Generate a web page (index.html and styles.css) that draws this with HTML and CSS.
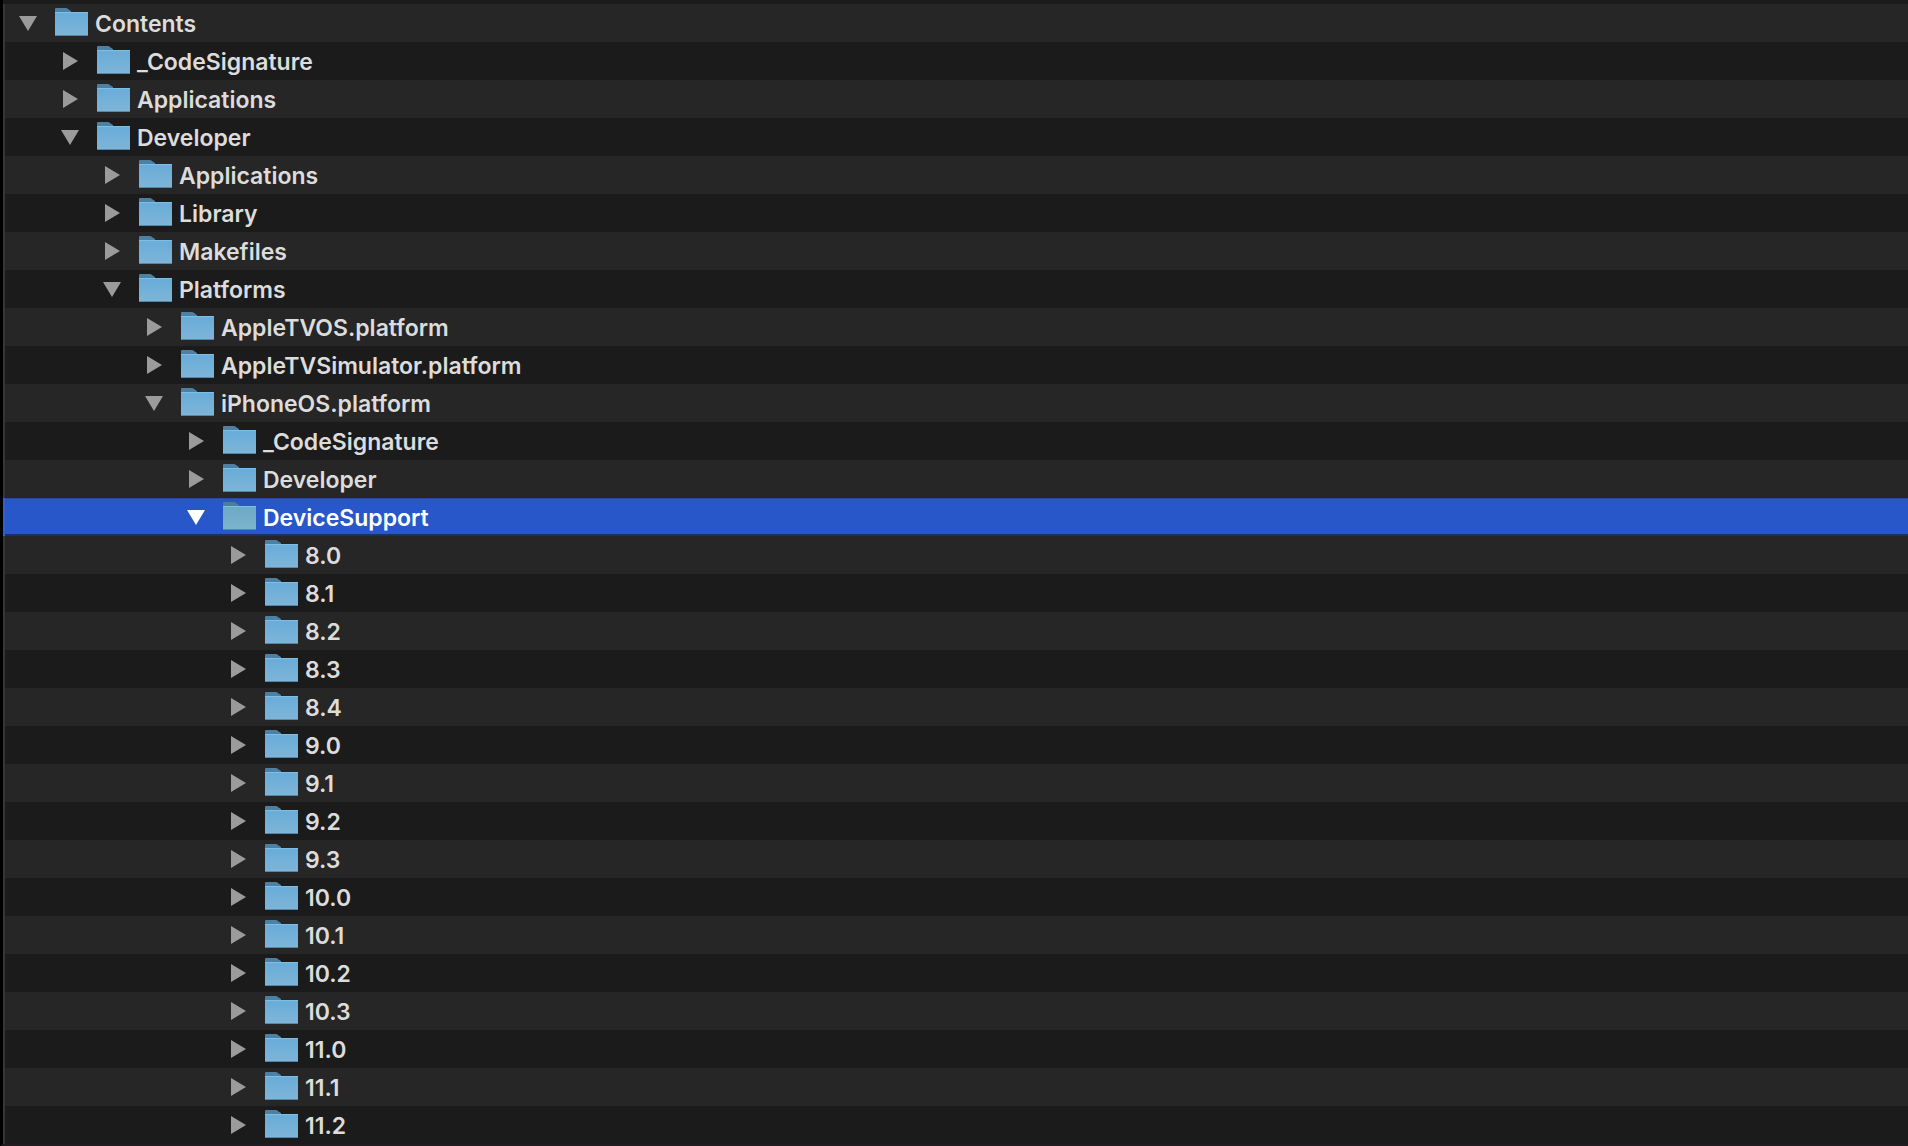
FILE: index.html
```
<!DOCTYPE html>
<html lang="en">
<head>
<meta charset="utf-8">
<title>Contents</title>
<link rel="stylesheet" href="styles.css">
</head>
<body>

<svg class="defs" aria-hidden="true">
    <defs>
        <linearGradient id="folder-fill" x1="0" y1="0" x2="0" y2="1">
            <stop offset="0" stop-color="#67acd8"/>
            <stop offset="1" stop-color="#7fb5d8"/>
        </linearGradient>
        <linearGradient id="folder-fill-selected" x1="0" y1="0" x2="0" y2="1">
            <stop offset="0" stop-color="#6ba9c6"/>
            <stop offset="1" stop-color="#7db4cb"/>
        </linearGradient>
    </defs>
    <symbol id="folder" viewBox="0 0 33 28">
        <path class="folder-tab" d="M0 6V1Q0 0 1 0H11Q12 0 13 1L16 3V6Z"/>
        <rect class="folder-front" y="4" width="33" height="24"/>
        <path class="folder-top" d="M0 4.5H33"/>
        <path class="folder-bottom" d="M0 27.5H33"/>
    </symbol>
    <symbol id="closed" viewBox="0 0 20 20">
        <path d="M3 1L18 10L3 19Z"/>
    </symbol>
    <symbol id="open" viewBox="0 0 20 20">
        <path d="M1 3H19L10 18Z"/>
    </symbol>
</svg>

<ul class="tree" role="tree" aria-label="Contents">
</ul>

<script>
var TREE = TREE || {};

// level, name, state, selected
TREE.items = [
    [0, "Contents", "open"],
    [1, "_CodeSignature"],
    [1, "Applications"],
    [1, "Developer", "open"],
    [2, "Applications"],
    [2, "Library"],
    [2, "Makefiles"],
    [2, "Platforms", "open"],
    [3, "AppleTVOS.platform"],
    [3, "AppleTVSimulator.platform"],
    [3, "iPhoneOS.platform", "open"],
    [4, "_CodeSignature"],
    [4, "Developer"],
    [4, "DeviceSupport", "open", true],
    [5, "8.0"],
    [5, "8.1"],
    [5, "8.2"],
    [5, "8.3"],
    [5, "8.4"],
    [5, "9.0"],
    [5, "9.1"],
    [5, "9.2"],
    [5, "9.3"],
    [5, "10.0"],
    [5, "10.1"],
    [5, "10.2"],
    [5, "10.3"],
    [5, "11.0"],
    [5, "11.1"],
    [5, "11.2"]
];

TREE.draw = function () {
    "use strict";
    var tmpHTML = "";
    var i = 0;
    var item;
    var state;

    for (i = 0; i < TREE.items.length; i += 1) {
        item = TREE.items[i];
        state = item[2] || "closed";

        tmpHTML += "<li class=\"row level-" + item[0] + (item[3] ? " selected" : "") + "\" role=\"treeitem\"";
        tmpHTML += " aria-level=\"" + (item[0] + 1) + "\" aria-expanded=\"" + (state === "open") + "\">";
        tmpHTML += "<button class=\"arrow\" type=\"button\" aria-label=\"Toggle " + item[1] + "\">";
        tmpHTML += "<svg><use href=\"#" + state + "\"/><\/svg><\/button>";
        tmpHTML += "<svg class=\"folder\"><use href=\"#folder\"/><\/svg>";
        tmpHTML += "<span class=\"name\">" + item[1] + "<\/span><\/li>";
    }

    document.querySelector(".tree").innerHTML = tmpHTML;
};

TREE.draw();
</script>
</body>
</html>
```
FILE: styles.css
```
* { box-sizing: border-box; }
body { margin: 0; background: #1b1b1b; color: #dcdcdc; font: 600 23px/36px Inter, "Liberation Sans", sans-serif; }

.defs { position: absolute; width: 0; height: 0; }

.tree { list-style: none; margin: 0; padding: 4px 0 0; border-left: 3px solid #000; border-bottom: 2px solid #241b20; }

.row { --folder: url(#folder-fill); --tab: #4d80a3; display: flex; align-items: center; height: 38px; padding-right: 16px; border-left: 2px solid #363636; white-space: nowrap; }
.row:nth-child(odd) { background: #262626; }
.row.selected { --folder: url(#folder-fill-selected); --tab: #4a7f95; background: #2857c9; border-left-color: #3060cc; box-shadow: inset 0 1px #284a9c, inset 0 -2px #1d2f66; color: #fff; }

/* indent per level */
.level-0 { padding-left: 13px; }
.level-1 { padding-left: 55px; }
.level-2 { padding-left: 97px; }
.level-3 { padding-left: 139px; }
.level-4 { padding-left: 181px; }
.level-5 { padding-left: 223px; }

.arrow { display: block; width: 20px; height: 20px; margin: 0 17px 0 0; padding: 0; border: 0; background: none; fill: #9b9b9b; }
.arrow svg { display: block; width: 20px; height: 20px; }
.selected .arrow { fill: #fff; }

.folder { flex: none; width: 33px; height: 28px; margin: 0 7px 2px 0; }
.folder-tab { fill: var(--tab); }
.folder-front { fill: var(--folder); }
.folder-top { stroke: #7cc0e8; }
.folder-bottom { stroke: #5788a8; }

.name { padding-top: 2px; }
```
